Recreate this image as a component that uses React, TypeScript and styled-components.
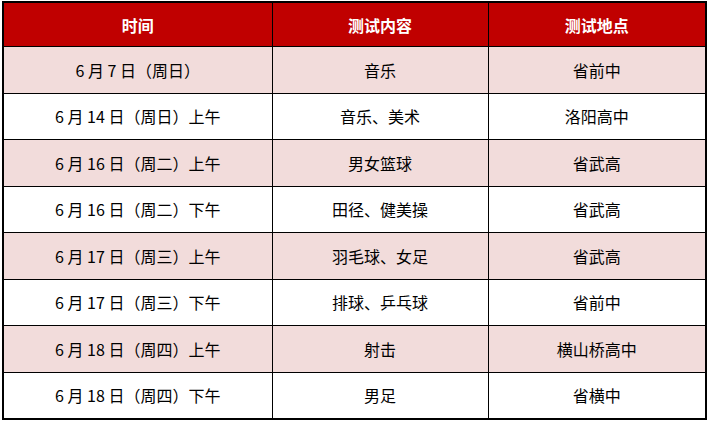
import styled, { createGlobalStyle } from "styled-components";

const GlobalStyle = createGlobalStyle`
    body {
        margin: 0;
        background: #ffffff;
        font-family: "Noto Sans CJK SC", "Liberation Sans", sans-serif;
    }
`;

interface Row {
    time: string;
    item: string;
    place: string;
}

const rows: Row[] = [
    { time: "6 月 7 日（周日）", item: "音乐", place: "省前中" },
    { time: "6 月 14 日（周日）上午", item: "音乐、美术", place: "洛阳高中" },
    { time: "6 月 16 日（周二）上午", item: "男女篮球", place: "省武高" },
    { time: "6 月 16 日（周二）下午", item: "田径、健美操", place: "省武高" },
    { time: "6 月 17 日（周三）上午", item: "羽毛球、女足", place: "省武高" },
    { time: "6 月 17 日（周三）下午", item: "排球、乒乓球", place: "省前中" },
    { time: "6 月 18 日（周四）上午", item: "射击", place: "横山桥高中" },
    { time: "6 月 18 日（周四）下午", item: "男足", place: "省横中" },
];

export default function App() {
    return (
        <>
            <GlobalStyle />
            <Wrap>
                <Table>
                    <colgroup>
                        <col style={{ width: 269 }} />
                        <col style={{ width: 216 }} />
                        <col style={{ width: 218 }} />
                    </colgroup>
                    <thead>
                        <tr>
                            <HeadCell>时间</HeadCell>
                            <HeadCell>测试内容</HeadCell>
                            <HeadCell>测试地点</HeadCell>
                        </tr>
                    </thead>
                    <tbody>
                        {rows.map((row, i) => (
                            <BodyRow key={i} $shaded={i % 2 === 0}>
                                <Cell>{row.time}</Cell>
                                <Cell>{row.item}</Cell>
                                <Cell>{row.place}</Cell>
                            </BodyRow>
                        ))}
                    </tbody>
                </Table>
            </Wrap>
        </>
    );
}

const Wrap = styled.div`
    padding: 1px 2px 0 2px;
`;

const Table = styled.table`
    border-collapse: collapse;
    table-layout: fixed;
    width: 703px;
    border: 2px solid #000;
`;

const HeadCell = styled.th`
    height: 43px;
    padding: 0;
    background: #c00000;
    color: #ffffff;
    font-size: 16px;
    font-weight: bold;
    text-align: center;
    border: 1.5px solid #000;
`;

const BodyRow = styled.tr<{ $shaded: boolean }>`
    background: ${(p) => (p.$shaded ? "#f2dcdb" : "#ffffff")};
`;

const Cell = styled.td`
    height: 45.5px;
    padding: 0;
    color: #000;
    font-size: 16px;
    text-align: center;
    border: 1.5px solid #000;
    white-space: nowrap;
`;
